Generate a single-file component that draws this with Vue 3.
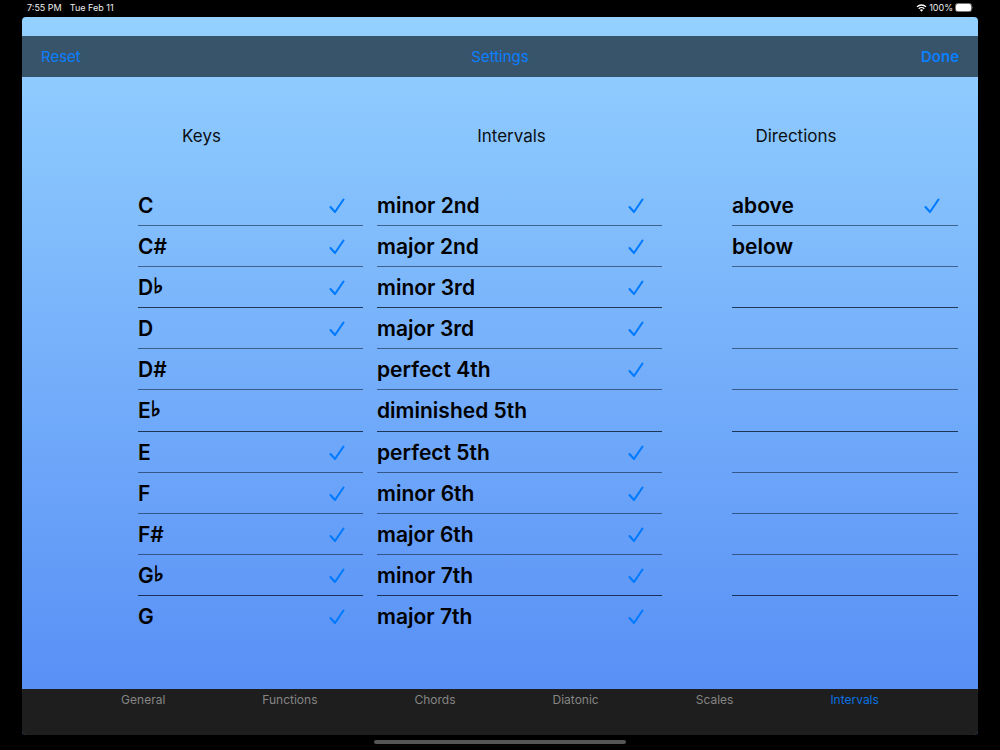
<script setup>
import { reactive, ref } from 'vue'

const make = (names, off = []) => names.map((name) => ({ name, on: !off.includes(name) }))

const columns = reactive([
  {
    id: 'keys',
    title: 'Keys',
    rows: make(['C', 'C#', 'D♭', 'D', 'D#', 'E♭', 'E', 'F', 'F#', 'G♭', 'G'], ['D#', 'E♭']),
    blanks: 0,
  },
  {
    id: 'intervals',
    title: 'Intervals',
    rows: make(
      ['minor 2nd', 'major 2nd', 'minor 3rd', 'major 3rd', 'perfect 4th', 'diminished 5th',
        'perfect 5th', 'minor 6th', 'major 6th', 'minor 7th', 'major 7th'],
      ['diminished 5th'],
    ),
    blanks: 0,
  },
  {
    id: 'directions',
    title: 'Directions',
    rows: make(['above', 'below'], ['below']),
    blanks: 8,
  },
])

const tabs = ['General', 'Functions', 'Chords', 'Diatonic', 'Scales', 'Intervals']
const active = ref('Intervals')

const reset = () => columns.forEach((c) => c.rows.forEach((r) => { r.on = true }))
</script>

<template>
  <div class="device">
    <header class="status">
      <span>7:55 PM</span>
      <span class="date">Tue Feb 11</span>
      <span class="battery">
        <svg class="wifi" viewBox="0 0 20 15" aria-hidden="true">
          <path d="M1.5 5.4 A12 12 0 0 1 18.5 5.4" />
          <path d="M4.8 8.8 A7.4 7.4 0 0 1 15.2 8.8" />
          <path class="dot" d="M6.9 11.2 A4.4 4.4 0 0 1 13.1 11.2 L10 14.6 Z" />
        </svg>
        <span>100%</span>
        <svg class="cell" viewBox="0 0 38 18" aria-hidden="true">
          <rect class="shell" x="1" y="1" width="32" height="16" rx="4" />
          <rect class="charge" x="2" y="2" width="30" height="14" rx="3" />
          <path class="tip" d="M35 6 Q38 9 35 12 Z" />
        </svg>
      </span>
    </header>

    <div class="window">
      <nav class="bar">
        <button type="button" class="left" @click="reset">Reset</button>
        <h1>Settings</h1>
        <button type="button" class="right">Done</button>
      </nav>

      <main class="columns">
        <section v-for="c in columns" :key="c.id" :class="['column', c.id]">
          <h2>{{ c.title }}</h2>
          <ul>
            <li v-for="r in c.rows" :key="r.name">
              <label>
                <span>{{ r.name.replace('♭', '') }}<span v-if="r.name.includes('♭')" class="flat">♭</span></span>
                <span class="tick">
                  <input v-model="r.on" type="checkbox" />
                  <svg v-if="r.on" viewBox="0 0 16 16" aria-hidden="true"><path d="M1.5 9 L6 14 L14.5 1.5" /></svg>
                </span>
              </label>
            </li>
            <li v-for="n in c.blanks" :key="n"></li>
          </ul>
        </section>
      </main>

      <footer class="tabs">
        <button
          v-for="t in tabs"
          :key="t"
          type="button"
          :class="{ active: t === active }"
          @click="active = t"
        >{{ t }}</button>
      </footer>
    </div>
    <div class="home"></div>
  </div>
</template>

<style>
body {
  margin: 0;
  background: #000;
}
</style>

<style scoped>
.device {
  min-height: 100vh;
  box-sizing: border-box;
  padding: 0 22px;
  display: flex;
  flex-direction: column;
  background: #000;
  font-family: Inter, "Liberation Sans", "DejaVu Sans", sans-serif;
}
.status {
  height: 17px;
  display: flex;
  align-items: center;
  padding: 0 4px 2px 5px;
  color: #eee;
  font-size: 9px;
  line-height: 14px;
  box-sizing: border-box;
}
.date {
  margin-left: 8px;
}
.battery {
  margin-left: auto;
  display: flex;
  align-items: center;
  gap: 2px;
}
.wifi {
  width: 11px;
  height: 8px;
  fill: none;
  stroke: #fff;
  stroke-width: 2.4;
}
.wifi .dot {
  fill: #fff;
  stroke: none;
}
.cell {
  width: 19px;
  height: 9px;
}
.shell {
  fill: none;
  stroke: #777;
  stroke-width: 2;
}
.charge {
  fill: #fff;
}
.tip {
  fill: #777;
}
.window {
  flex: 1;
  display: flex;
  flex-direction: column;
  padding-top: 19px;
  border-radius: 4px;
  overflow: hidden;
  background: linear-gradient(#94d1ff, #548bf5);
}
button {
  border: 0;
  padding: 0;
  background: none;
  font: inherit;
  color: inherit;
  cursor: pointer;
}
.bar {
  height: 41px;
  padding: 0 19px;
  display: grid;
  grid-template-columns: 1fr auto 1fr;
  align-items: center;
  background: #38546b;
  color: #0a7fff;
  font-size: 15px;
}
.bar h1 {
  margin: 0;
  font-size: 15px;
  font-weight: 400;
}
.left {
  justify-self: start;
}
.bar .right {
  justify-self: end;
  font-weight: 600;
}
.columns {
  flex: 1;
  display: grid;
  grid-template-columns: 225fr 14fr 285fr 70fr 226fr;
  padding: 48px 20px 52px 116px;
}
.column {
  display: flex;
  flex-direction: column;
}
.keys {
  grid-column: 1;
}
.intervals {
  grid-column: 3;
}
.directions {
  grid-column: 5;
}
h2 {
  margin: 0 0 38px;
  font-size: 17px;
  line-height: 22px;
  font-weight: 400;
  text-align: center;
  color: #0a0f14;
}
.keys h2,
.directions h2 {
  padding-right: 98px;
}
.intervals h2 {
  padding-right: 16px;
}
ul {
  flex: 1;
  margin: 0;
  padding: 0;
  list-style: none;
  display: grid;
  grid-template-rows: repeat(11, 1fr);
}
li {
  min-height: 40px;
  border-bottom: 1px solid rgba(10, 25, 50, 0.55);
}
li:nth-child(3),
li:nth-child(6),
li:nth-child(10) {
  border-bottom-color: rgba(10, 25, 50, 0.8);
}
li:nth-child(11) {
  border-bottom-color: transparent;
}
label {
  height: 100%;
  box-sizing: border-box;
  display: flex;
  align-items: center;
  justify-content: space-between;
  padding: 2px 18px 0 0;
  font-size: 21px;
  line-height: 28px;
  font-weight: 600;
  color: #000;
}
.flat {
  font-family: "DejaVu Sans", sans-serif;
  font-weight: 700;
  line-height: 20px;
  vertical-align: 2px;
  -webkit-text-stroke: 1px #000;
}
.tick {
  display: grid;
  width: 16px;
  height: 16px;
}
.tick > * {
  grid-area: 1 / 1;
  width: 16px;
  height: 16px;
  margin: 0;
}
.tick input {
  appearance: none;
}
.tick svg {
  fill: none;
  stroke: #007aff;
  stroke-width: 2.1;
  stroke-linecap: round;
  stroke-linejoin: round;
  pointer-events: none;
}
.tabs {
  height: 46px;
  box-sizing: border-box;
  padding-top: 3px;
  display: flex;
  justify-content: center;
  align-items: flex-start;
  gap: 97px;
  background: #1e1e1e;
  color: #858585;
  font-size: 12px;
  line-height: 16px;
}
.tabs .active {
  color: #0a72e0;
}
.home {
  width: 252px;
  height: 4px;
  margin: 5px auto 6px;
  border-radius: 2px;
  background: #555;
}
</style>
